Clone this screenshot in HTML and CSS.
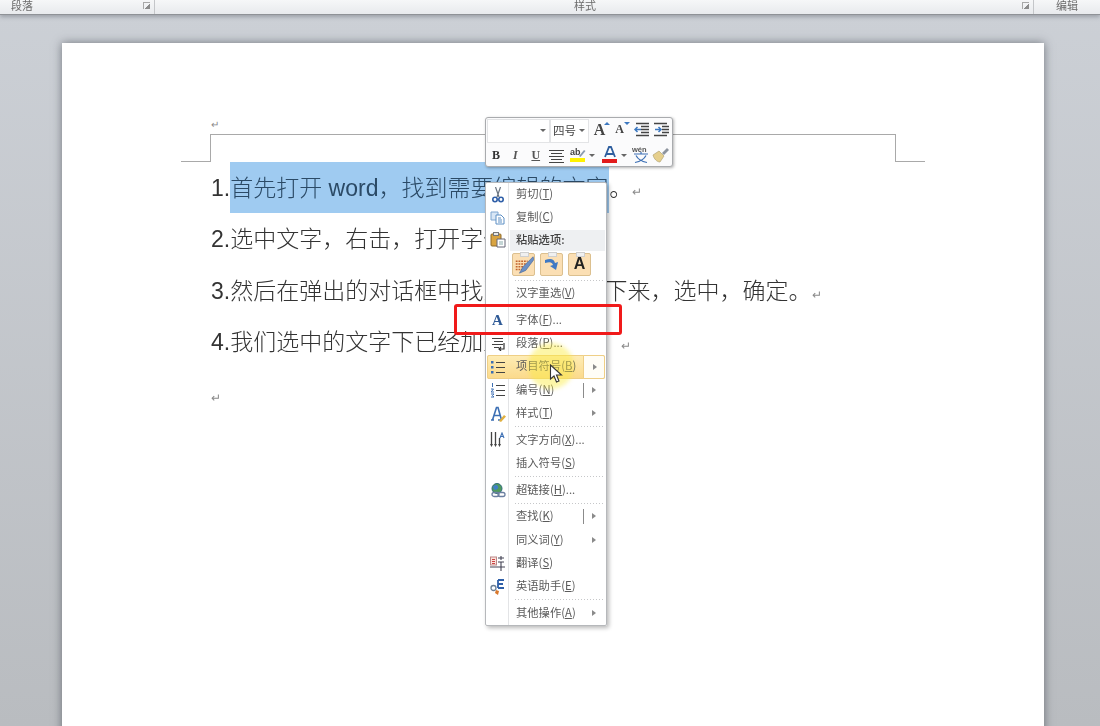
FILE: index.html
```html
<!DOCTYPE html>
<html lang="zh-CN">
<head>
    <meta charset="UTF-8">
    <meta name="viewport" content="width=device-width, initial-scale=1.0">
    <title>Word 右键菜单</title>
    <link rel="stylesheet" href="styles.css">
</head>
<body>
    <div class="ribbon">
        <div class="ribbon-group group-para"><span>段落</span><i class="launcher"></i></div>
        <div class="ribbon-group group-style"><span>样式</span><i class="launcher"></i></div>
        <div class="ribbon-group group-edit"><span>编辑</span></div>
    </div>

    <div class="workspace">
        <div class="page">
            <div class="header-area">
                <span class="mark header-mark">↵</span>
                <div class="header-rule">
                    <i class="crop crop-left"></i>
                    <i class="crop crop-right"></i>
                </div>
            </div>
            <div class="body-text">
                <p>1.<span class="selected">首先打开 word，找到需要编辑的文字</span>。<span class="mark">↵</span></p>
                <p>2.选中文字，右击，打开字体对话框。</p>
                <p>3.然后在弹出的对话框中找到着重号 拉下来，选中，确定。<span class="mark">↵</span></p>
                <p>4.我们选中的文字下已经加上了着重号。<span class="mark">↵</span></p>
                <p class="empty"><span class="mark">↵</span></p>
            </div>
        </div>
    </div>

    <!-- 浮动工具栏 -->
    <div class="mini-toolbar">
        <div class="tb-row">
            <div class="combo combo-font"><i class="drop"></i></div>
            <div class="combo combo-size">四号<i class="drop"></i></div>
            <span class="tb-btn tb-letter tb-grow">A<i class="tick tick-up"></i></span>
            <span class="tb-btn tb-letter tb-shrink">A<i class="tick tick-down"></i></span>
            <span class="tb-btn">
                <svg width="17" height="17" viewBox="0 0 17 17"><path d="M3 2.500h13M8 5.500h8M8 8.500h8M8 11.500h8M3 14.500h13" stroke="#444" stroke-width="1.300"/><path d="M8 8.500H2M4.500 6 2 8.500 4.500 11" fill="none" stroke="#3c78c0" stroke-width="1.500"/></svg>
            </span>
            <span class="tb-btn">
                <svg width="17" height="17" viewBox="0 0 17 17"><path d="M1 2.500h13M9 5.500h7M9 8.500h7M9 11.500h7M1 14.500h13" stroke="#444" stroke-width="1.300"/><path d="M2 8.500h6M5.500 6 8 8.500 5.500 11" fill="none" stroke="#3c78c0" stroke-width="1.500"/></svg>
            </span>
        </div>
        <div class="tb-row tb-row-low">
            <span class="tb-btn tb-letter tb-bold">B</span>
            <span class="tb-btn tb-letter tb-italic">I</span>
            <span class="tb-btn tb-letter tb-under">U</span>
            <span class="tb-btn">
                <svg width="15" height="15" viewBox="0 0 15 15"><path d="M0 2.500h15M2 5.500h11M0 8.500h15M2 11.500h11M0 14.500h15" stroke="#444" stroke-width="1.200"/></svg>
            </span>
            <span class="tb-btn tb-wide">
                <svg width="16" height="18" viewBox="0 0 16 18"><text x="0" y="9" class="svg-ab">ab</text><path d="M9 10l5-6 1.500 1-5 6z" fill="#8a9bb0"/><rect y="12" width="15" height="4" fill="#fff200"/></svg>
                <i class="drop"></i>
            </span>
            <span class="tb-btn tb-wide">
                <svg width="16" height="18" viewBox="0 0 16 18"><path d="M3 11 7 1h2l4 10M4.500 8h7" fill="none" stroke="#2e5e9e" stroke-width="1.800"/><rect y="13" width="15" height="4" fill="#e21b1b"/></svg>
                <i class="drop"></i>
            </span>
            <span class="tb-btn">
                <svg width="18" height="18" viewBox="0 0 18 18"><text x="0" y="6" class="svg-wen">wén</text><path d="M2 8h14M9 6v2M4 9.500c2 4 6 6 11 7M14 9.500c-2 4-6 6-11 7" fill="none" stroke="#3c6fb4" stroke-width="1.200"/></svg>
            </span>
            <span class="tb-btn">
                <svg width="18" height="18" viewBox="0 0 18 18"><path d="M1 9l6-4 5 5-4 6c-3 0-6-3-7-7z" fill="#e6cf8c" stroke="#a89a6a" stroke-width=".6"/><path d="M10 7l5-5 2 2-5 5z" fill="#8d949e"/></svg>
            </span>
        </div>
    </div>

    <!-- 右键菜单 -->
    <div class="context-menu">
        <div class="menu-item">
            <span class="menu-icon"><svg width="12" height="16" viewBox="0 0 12 16"><path d="M3.500 0l3.500 10M8.500 0 5 10" stroke="#6a7480" stroke-width="1.200"/><circle cx="3" cy="12.500" r="2.200" fill="none" stroke="#2f5fa8" stroke-width="1.600"/><circle cx="9" cy="12.500" r="2.200" fill="none" stroke="#2f5fa8" stroke-width="1.600"/></svg></span>
            <span class="menu-label">剪切(<u>T</u>)</span>
        </div>
        <div class="menu-item">
            <span class="menu-icon"><svg width="15" height="14" viewBox="0 0 15 14"><path d="M1 1h7v8H1z" fill="#d9e7f6" stroke="#7ea6d0"/><path d="M6 4h5l3 3v6H6z" fill="#fff" stroke="#5d8fc4"/><path d="M8 7h3M8 9h4M8 11h4" stroke="#5d8fc4"/></svg></span>
            <span class="menu-label">复制(<u>C</u>)</span>
        </div>
        <div class="menu-item paste-head">
            <span class="menu-icon"><svg width="16" height="16" viewBox="0 0 16 16"><rect x="1" y="2" width="10" height="12" rx="1" fill="#d9a441" stroke="#8f6a2a"/><rect x="3.500" y="0.500" width="5" height="3" fill="#e8e8e8" stroke="#777"/><path d="M7 7h8v8H7z" fill="#fff" stroke="#667"/><path d="M9 10h4M9 12h4" stroke="#8aa"/></svg></span>
            <span class="menu-label paste-title">粘贴选项:</span>
        </div>
        <div class="paste-options">
            <span class="paste-btn">
                <svg width="23" height="21" viewBox="0 0 23 21"><path d="M3 7h13M3 10h13M3 13h10M3 16h7" stroke="#c2622c" stroke-dasharray="2 1" stroke-width="1.500"/><path d="M22 2 11 13l-4 7 7-3L23 5z" fill="#6b8fc4" stroke="#3f5f94" stroke-width=".6"/></svg>
            </span>
            <span class="paste-btn">
                <svg width="17" height="15" viewBox="0 0 17 15"><path d="M2 3c6-2 9-1 10 3l3-1-2 8-6-4 3-1C9 5 7 4.500 2 6z" fill="#3f79c4"/></svg>
            </span>
            <span class="paste-btn paste-a">A</span>
        </div>
        <div class="menu-sep"></div>
        <div class="menu-item"><span class="menu-icon"></span><span class="menu-label">汉字重选(<u>V</u>)</span></div>
        <div class="menu-sep"></div>
        <div class="menu-item">
            <span class="menu-icon icon-font">A</span>
            <span class="menu-label">字体(<u>F</u>)...</span>
        </div>
        <div class="menu-item">
            <span class="menu-icon"><svg width="14" height="14" viewBox="0 0 14 14"><path d="M1 1.500h11M3 4.500h9M1 7.500h11M3 10.500h5" stroke="#444" stroke-width="1.200"/><path d="M13 6v6H8M10 10l-2 2 2 2" fill="none" stroke="#333" stroke-width="1.200"/></svg></span>
            <span class="menu-label">段落(<u>P</u>)...</span>
        </div>
        <div class="menu-item is-active">
            <span class="menu-icon"><svg width="14" height="14" viewBox="0 0 14 14"><path d="M5 2.500h9M5 7.500h9M5 12.500h9" stroke="#444" stroke-width="1.200"/><rect x="0" y="1" width="2.500" height="2.500" fill="#3c6fb4"/><rect x="0" y="6" width="2.500" height="2.500" fill="#3c6fb4"/><rect x="0" y="11" width="2.500" height="2.500" fill="#3c6fb4"/></svg></span>
            <span class="menu-label">项目符号(<u>B</u>)</span>
            <span class="menu-split"><i class="arrow"></i></span>
        </div>
        <div class="menu-item">
            <span class="menu-icon"><svg width="14" height="15" viewBox="0 0 14 15"><path d="M5 2.500h9M5 7.500h9M5 12.500h9" stroke="#444" stroke-width="1.200"/><path d="M1.500 0v4M0 6h2.500L0 9h3M0 11h3l-1.500 1.500L3 14H0" fill="none" stroke="#3c6fb4"/></svg></span>
            <span class="menu-label">编号(<u>N</u>)</span>
            <span class="menu-split has-line"><i class="arrow"></i></span>
        </div>
        <div class="menu-item">
            <span class="menu-icon"><svg width="16" height="16" viewBox="0 0 16 16"><path d="M1 14h3M8 14h3M2.500 14 6.500 1.500h1.500l3.500 12.500M4.500 9.500h5" fill="none" stroke="#3c6fb4" stroke-width="1.600"/><path d="M9 15l5-6 2 1.500L11 16z" fill="#e0b040"/></svg></span>
            <span class="menu-label">样式(<u>T</u>)</span>
            <span class="menu-split"><i class="arrow"></i></span>
        </div>
        <div class="menu-sep"></div>
        <div class="menu-item">
            <span class="menu-icon"><svg width="15" height="16" viewBox="0 0 15 16"><path d="M1.500 0v12M5.500 0v12M9.500 6v6" stroke="#444" stroke-width="1.300"/><path d="M0 12l1.500 3L3 12zM4 12l1.500 3L7 12zM8 12l1.500 3 1.500-3z" fill="#444"/><path d="M10 6l2-5 2 5M11 4.500h2" fill="none" stroke="#3c6fb4" stroke-width="1.100"/></svg></span>
            <span class="menu-label">文字方向(<u>X</u>)...</span>
        </div>
        <div class="menu-item"><span class="menu-icon"></span><span class="menu-label">插入符号(<u>S</u>)</span></div>
        <div class="menu-sep"></div>
        <div class="menu-item">
            <span class="menu-icon"><svg width="16" height="15" viewBox="0 0 16 15"><circle cx="7" cy="5.500" r="5" fill="#4f9a5c" stroke="#2f6a7a"/><path d="M3 3.500c2-2 4-2 5 0s-2 4-4 3z" fill="#3f7fc8"/><rect x="2" y="9.500" width="7" height="4" rx="2" fill="none" stroke="#6b7fa0" stroke-width="1.300"/><rect x="8" y="9.500" width="7" height="4" rx="2" fill="none" stroke="#6b7fa0" stroke-width="1.300"/></svg></span>
            <span class="menu-label">超链接(<u>H</u>)...</span>
        </div>
        <div class="menu-sep"></div>
        <div class="menu-item">
            <span class="menu-icon"></span>
            <span class="menu-label">查找(<u>K</u>)</span>
            <span class="menu-split has-line"><i class="arrow"></i></span>
        </div>
        <div class="menu-item">
            <span class="menu-icon"></span>
            <span class="menu-label">同义词(<u>Y</u>)</span>
            <span class="menu-split"><i class="arrow"></i></span>
        </div>
        <div class="menu-item">
            <span class="menu-icon"><svg width="15" height="15" viewBox="0 0 15 15"><rect x="0.500" y="1" width="6" height="8" fill="#fbe3dc" stroke="#b88"/><path d="M2 3.500h3M2 5.500h3M2 7.500h3" stroke="#c44"/><path d="M8 2h6M11 0v4M8 6h6M0 11h15M11 6v9" stroke="#445" stroke-width="1.100"/></svg></span>
            <span class="menu-label">翻译(<u>S</u>)</span>
        </div>
        <div class="menu-item">
            <span class="menu-icon"><svg width="15" height="16" viewBox="0 0 15 16"><path d="M8 1h6M8 1v8M8 5h5M8 9h6" stroke="#2f5fa8" stroke-width="1.800" fill="none"/><circle cx="3.500" cy="9" r="2.500" fill="none" stroke="#6b7f95" stroke-width="1.300"/><path d="M6 11l3 1-1 4-3-2z" fill="#d9782c"/></svg></span>
            <span class="menu-label">英语助手(<u>E</u>)</span>
        </div>
        <div class="menu-sep"></div>
        <div class="menu-item">
            <span class="menu-icon"></span>
            <span class="menu-label">其他操作(<u>A</u>)</span>
            <span class="menu-split"><i class="arrow"></i></span>
        </div>
    </div>

    <div class="red-box"></div>
    <div class="cursor-glow"></div>
    <svg class="cursor" width="14" height="20" viewBox="0 0 14 20"><path d="M1.500 1v14l3.500-3 2.500 6 2.500-1-2.500-6h5z" fill="#fff" stroke="#333" stroke-width="1.100"/></svg>
</body>
</html>
```
FILE: styles.css
```css
* {
    margin: 0;
    padding: 0;
    box-sizing: border-box;
}

body {
    width: 1100px;
    height: 726px;
    overflow: hidden;
    position: relative;
    background: linear-gradient(#ccd0d6, #b9bcc0);
    font-family: "Liberation Sans", "Noto Sans CJK SC", sans-serif;
}

/* 截图本身有点糊 */
.ribbon, .body-text, .mini-toolbar, .context-menu {
    filter: blur(0.35px);
}

/* 功能区底部 */
.ribbon {
    display: flex;
    height: 15px;
    overflow: hidden;
    background: linear-gradient(#f6f7f8, #e8eaed);
    border-bottom: 1px solid #8f9297;
    box-shadow: 0 2px 4px rgba(70, 75, 85, 0.35);
    position: relative;
}

.ribbon-group {
    position: relative;
    display: flex;
    justify-content: center;
    height: 14px;
    border-right: 1px solid #c4c6c9;
    font-size: 11px;
    line-height: 12px;
    color: #6b6b6b;
}

.group-para { width: 155px; justify-content: flex-start; padding-left: 11px; }
.group-style { width: 879px; padding-right: 18px; }
.group-edit { width: 66px; border-right: none; }

.launcher {
    position: absolute;
    right: 4px;
    top: 2px;
    width: 7px;
    height: 7px;
    border-left: 1px solid #a8a8a8;
    border-top: 1px solid #a8a8a8;
    background: linear-gradient(135deg, transparent 55%, #8c8c8c 55%);
}

/* 页面 */
.workspace {
    padding: 28px 56px 0 62px;
}

.page {
    width: 982px;
    height: 700px;
    background: #fff;
    box-shadow: 0 0 9px rgba(40, 45, 55, 0.55);
    padding: 76px 0 0 148px;
}

.header-area {
    position: relative;
    width: 686px;
    height: 43px;
}

.header-mark {
    display: block;
    height: 15px;
    padding-left: 1px;
    font-size: 10px;
    line-height: 12px;
}

.mark {
    color: #8a8a8a;
}

.header-rule {
    height: 28px;
    border: 1px solid #a9a9a9;
    border-width: 1px 1px 0;
    position: relative;
}

.crop {
    position: absolute;
    bottom: 0;
    width: 29px;
    height: 1px;
    background: #a9a9a9;
}

.crop-left { left: -30px; }
.crop-right { right: -30px; }

.body-text {
    padding-left: 1px;
    font-size: 23px;
    font-weight: 300;
    line-height: 53px;
    color: #333;
}

.body-text p {
    height: 51.3px;
    white-space: nowrap;
}

.body-text .mark {
    font-size: 12px;
}

.body-text .empty {
    line-height: 55px;
}

.selected {
    display: inline-block;
    vertical-align: top;
    width: 379px;
    height: 51px;
    background: #9fcbf1;
    color: #2b4a66;
    white-space: nowrap;
    overflow: hidden;
}

/* 浮动工具栏 */
.mini-toolbar {
    position: absolute;
    left: 485px;
    top: 117px;
    width: 188px;
    height: 50px;
    background: #fbfbfc;
    border: 1px solid #a9abae;
    border-radius: 3px;
    box-shadow: 1px 1px 3px rgba(0, 0, 0, 0.3);
    padding: 1px;
}

.tb-row {
    display: flex;
    align-items: flex-start;
    height: 24px;
}

.tb-row-low {
    align-items: center;
}

.tb-row-low .tb-btn {
    width: 20.500px;
}

.tb-row-low .tb-bold {
    width: 18px;
}

.tb-row-low .tb-wide {
    width: 32px;
}

.combo {
    position: relative;
    display: flex;
    align-items: center;
    height: 24px;
    padding-bottom: 3px;
    background: #fff;
    border: 1px solid #e3e4e6;
    font-family: "Noto Sans CJK SC", sans-serif;
    font-size: 11.500px;
    color: #444;
}

.combo-font { width: 63px; }
.combo-size { width: 39px; padding-left: 2px; margin-right: 2px; }

.drop {
    position: absolute;
    right: 3px;
    top: 9px;
    width: 0;
    height: 0;
    border: 3px solid transparent;
    border-top: 3px solid #666;
    border-bottom: none;
}

.tb-btn {
    position: relative;
    display: flex;
    justify-content: center;
    align-items: center;
    width: 20px;
    height: 21px;
    flex: none;
}

.tb-wide {
    justify-content: flex-start;
    padding-left: 3px;
}

.tb-wide .drop { right: 4px; }

.tb-letter {
    font-family: "Liberation Serif", serif;
    font-size: 12px;
    color: #333;
}

.tb-bold { font-weight: bold; }
.tb-italic { font-style: italic; font-weight: bold; color: #555; }
.tb-under { text-decoration: underline; font-weight: bold; color: #555; }

.tb-grow { font-size: 16px; font-weight: bold; padding-right: 3px; color: #444; }
.tb-shrink { font-size: 12px; font-weight: bold; padding-right: 3px; color: #444; }

.tick {
    position: absolute;
    right: 1px;
    top: 3px;
    width: 0;
    height: 0;
    border: 3px solid transparent;
}

.tick-up { border-bottom: 3px solid #3c78c0; border-top: none; }
.tick-down { border-top: 3px solid #3c78c0; border-bottom: none; }

.svg-ab {
    font-family: "Liberation Sans", sans-serif;
    font-size: 9px;
    font-weight: bold;
    fill: #444;
}

.svg-wen {
    font-family: "Liberation Sans", sans-serif;
    font-size: 7.500px;
    font-weight: bold;
    fill: #555;
}

/* 右键菜单 */
.context-menu {
    position: absolute;
    left: 485px;
    top: 182px;
    width: 122px;
    height: 444px;
    padding: 0 1px;
    border: 1px solid #b6b8bb;
    border-radius: 2px;
    box-shadow: 2px 2px 4px rgba(0, 0, 0, 0.28);
    background: linear-gradient(to right, #fff 22px, #e3e4e6 22px, #e3e4e6 23px, #fff 23px);
    font-family: "Noto Sans CJK SC", sans-serif;
    font-size: 11.300px;
    color: #5a5a5a;
}

.menu-item {
    display: flex;
    align-items: center;
    height: 23.300px;
    position: relative;
}

.menu-icon {
    flex: none;
    display: flex;
    justify-content: center;
    align-items: center;
    width: 21px;
    margin-right: 8px;
}

.menu-label {
    padding-bottom: 3px;
    white-space: nowrap;
}

.menu-label u {
    text-underline-offset: 1px;
}

.paste-head {
    height: 21px;
    background: linear-gradient(to right, transparent 23px, #eef0f2 23px);
}

.paste-title {
    font-weight: 500;
    color: #444;
}

.paste-options {
    display: flex;
    gap: 5px;
    height: 28px;
    padding: 2px 0 0 25px;
}

.paste-btn {
    position: relative;
    display: flex;
    justify-content: center;
    align-items: center;
    width: 23px;
    height: 23px;
    background: #fbdfb4;
    border: 1px solid #dcc08f;
    border-radius: 2px;
}

.paste-btn::before {
    content: "";
    position: absolute;
    left: 7px;
    top: -2px;
    width: 7px;
    height: 3px;
    background: #f0f0f0;
    border: 1px solid #cfcfcf;
}

.paste-a {
    font-family: "Liberation Sans", sans-serif;
    font-weight: bold;
    font-size: 16px;
    color: #222;
}

.menu-sep {
    height: 3.400px;
    margin-left: 28px;
    background-image: linear-gradient(to right, #c6c7c9 50%, transparent 50%);
    background-size: 3px 1px;
    background-repeat: repeat-x;
    background-position: 0 1px;
}

.icon-font {
    font-family: "Liberation Serif", serif;
    font-weight: bold;
    font-size: 15px;
    color: #2f5a96;
}

.menu-split {
    position: absolute;
    right: 0;
    top: 0;
    bottom: 0;
    width: 22px;
}

.menu-split.has-line {
    background: linear-gradient(#8b8b8b, #8b8b8b) no-repeat 0 50% / 1px 15px;
}

.arrow {
    position: absolute;
    left: 9px;
    top: 8px;
    width: 0;
    height: 0;
    border: 3.500px solid transparent;
    border-left: 4px solid #8a8a8a;
    border-right: none;
}

.is-active {
    background: linear-gradient(#feedb6, #fbd98a);
    outline: 1px solid #efcf86;
    outline-offset: -1px;
    border-radius: 2px;
}

.is-active .menu-split {
    background: #fffdf6;
    border: 1px solid #efcf86;
    border-radius: 0 2px 2px 0;
}

/* 标注 */
.red-box {
    position: absolute;
    left: 454px;
    top: 304px;
    width: 168px;
    height: 31px;
    border: 3px solid #f01a1a;
    border-radius: 3px;
}

.cursor-glow {
    position: absolute;
    left: 528px;
    top: 343px;
    width: 46px;
    height: 46px;
    border-radius: 50%;
    background: rgba(250, 235, 60, 0.45);
    filter: blur(2px);
}

.cursor {
    position: absolute;
    left: 549px;
    top: 364px;
}
```
